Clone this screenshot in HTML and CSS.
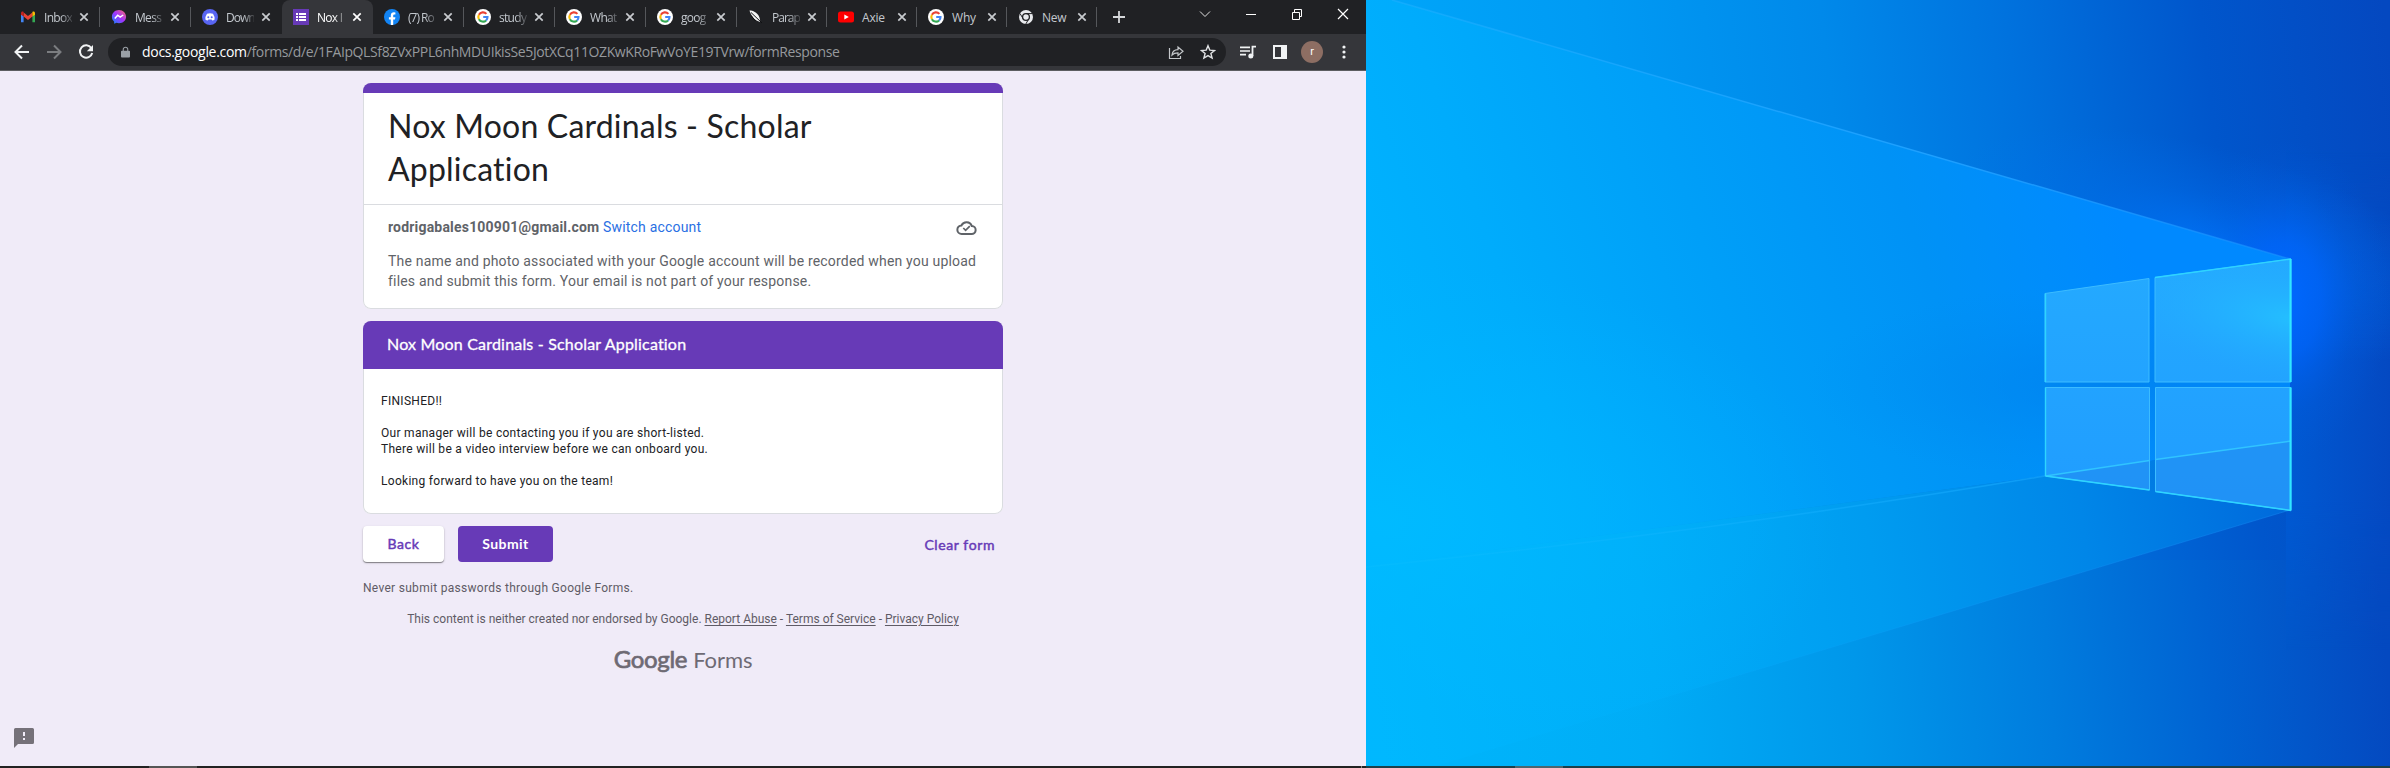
FILE: index.html
```html
<!DOCTYPE html>
<html lang="en">
<head>
<meta charset="utf-8">
<title>Nox Moon Cardinals - Scholar Application</title>
<link rel="stylesheet" href="styles.css">
</head>
<body>
<svg class="defs" width="0" height="0">
  <symbol id="close" viewBox="0 0 10 10"><path d="M1.3 1.3 8.7 8.7M8.7 1.3 1.3 8.7" stroke="currentColor" stroke-width="1.7" fill="none"/></symbol>
  <symbol id="google" viewBox="0 0 16 16"><circle cx="8" cy="8" r="8" fill="#fff"/>
    <g fill="none" stroke-width="2.1"><path d="M11.4 4.9A4.6 4.6 0 0 0 3.9 5.8" stroke="#ea4335"/><path d="M3.9 5.8a4.6 4.6 0 0 0 0 4.4" stroke="#fbbc05"/><path d="M3.9 10.2a4.6 4.6 0 0 0 7.2 1.2" stroke="#34a853"/><path d="M11.1 11.4A4.6 4.6 0 0 0 12.5 8H8.2" stroke="#4285f4"/></g></symbol>
</svg>
<div class="screens">
<div class="screen-left">
  <div class="tabstrip">
    <div class="tab"><svg class="ico" viewBox="0 0 16 16"><path d="M1 4v9.2h2.600V7.500z" fill="#4285f4"/><path d="M15 4v9.200h-2.600V7.500z" fill="#34a853"/><path d="M3.600 3.600 8 7l4.400-3.400v4L8 11 3.600 7.600z" fill="#ea4335"/><path d="M1 4.200c0-1.500 1.500-2 2.600-1.200v4.600L1 5.700z" fill="#c5221f"/><path d="M15 4.200c0-1.500-1.500-2-2.600-1.200v4.600L15 5.700z" fill="#fbbc04"/></svg><span class="name">Inbox</span><svg class="x"><use href="#close"/></svg></div>
    <div class="tab"><svg class="ico" viewBox="0 0 16 16"><defs><linearGradient id="ms" x1="0" y1="1" x2="1" y2="0"><stop offset="0" stop-color="#0a8cff"/><stop offset=".5" stop-color="#a033ff"/><stop offset="1" stop-color="#ff6a6a"/></linearGradient></defs><path d="M8 1C4 1 .900 3.900.9 7.700c0 2 .8 3.600 2.200 4.800l.1 2.300 2.300-1c.8.200 1.600.400 2.500.4 4 0 7.100-2.900 7.100-6.500S12 1 8 1z" fill="url(#ms)"/><path d="m3.800 9.500 2.900-3.300 2.500 1.900 3-2.100" fill="none" stroke="#fff" stroke-width="1.500"/></svg><span class="name">Mess</span><svg class="x"><use href="#close"/></svg></div>
    <div class="tab"><svg class="ico" viewBox="0 0 16 16"><circle cx="8" cy="8" r="8" fill="#5865f2"/><path d="M5 4.800Q8 3.800 11 4.800q1.800 2.700 1.600 5.600-1 .9-2.300 1.100l-.7-1H6.400l-.7 1q-1.300-.2-2.300-1.100Q3.200 7.500 5 4.800z" fill="#fff"/><circle cx="6.300" cy="8.200" r="1" fill="#5865f2"/><circle cx="9.700" cy="8.200" r="1" fill="#5865f2"/></svg><span class="name tight">Down</span><svg class="x"><use href="#close"/></svg></div>
    <div class="tab active"><svg class="ico" viewBox="0 0 16 16"><path d="M0 0h16v16H0z" fill="#673ab7"/><path d="M3 4h2v2H3zM6 4h7v2H6zM3 7h2v2H3zM6 7h7v2H6zM3 10h2v2H3zM6 10h7v2H6z" fill="#fff"/></svg><span class="name">Nox I</span><svg class="x"><use href="#close"/></svg></div>
    <div class="tab"><svg class="ico" viewBox="0 0 16 16"><circle cx="8" cy="8" r="8" fill="#1284f4"/><path d="M6.800 16v-5.500H4.900V8.200h1.900V6.600c0-2.200 1.300-3.300 3.100-3.300l1.500.1v2h-1c-1 0-1.200.6-1.200 1.300v1.500h2.200l-.4 2.300H9.200V16z" fill="#fff"/></svg><span class="name tight">(7) Ro</span><svg class="x"><use href="#close"/></svg></div>
    <div class="tab"><svg class="ico"><use href="#google"/></svg><span class="name">study</span><svg class="x"><use href="#close"/></svg></div>
    <div class="tab"><svg class="ico"><use href="#google"/></svg><span class="name">What</span><svg class="x"><use href="#close"/></svg></div>
    <div class="tab"><svg class="ico"><use href="#google"/></svg><span class="name">goog</span><svg class="x"><use href="#close"/></svg></div>
    <div class="tab narrow"><svg class="ico" viewBox="0 0 16 16"><path d="M1.500 1.500C5 1.500 9 3.500 10.800 7c1 2 1.400 3.800 1.300 6C7 11.500 3.500 8 1.500 1.500z" fill="#f4f4f4"/><path d="M3 3.500 14 14" stroke="#101113" stroke-width="1"/><path d="M3 6.500 7.500 12" stroke="#0c0c0d"/></svg><span class="name tight">Parap</span><svg class="x"><use href="#close"/></svg></div>
    <div class="tab narrow"><svg class="ico" viewBox="0 0 16 16"><rect y="2.500" width="16" height="11" rx="2.500" fill="#f00"/><path d="m6.300 5.500 4.500 2.500-4.500 2.500z" fill="#fff"/></svg><span class="name plain">Axie</span><svg class="x"><use href="#close"/></svg></div>
    <div class="tab narrow"><svg class="ico"><use href="#google"/></svg><span class="name plain">Why</span><svg class="x"><use href="#close"/></svg></div>
    <div class="tab narrow"><svg class="ico" viewBox="0 0 16 16"><circle cx="8" cy="8" r="7" fill="#e8eaed"/><circle cx="8" cy="8" r="3.400" fill="none" stroke="#202124" stroke-width="1.300"/><path d="M8 4.600h6.300M5.100 9.700 2 4.500M10.900 9.700 7.800 15" stroke="#202124" stroke-width="1"/></svg><span class="name plain">New</span><svg class="x"><use href="#close"/></svg></div>
    <svg class="plus" viewBox="0 0 12 12"><path d="M6 0v12M0 6h12" stroke="#d5d7da" stroke-width="1.800"/></svg>
    <div class="winbtns">
      <svg viewBox="0 0 12 12"><path d="m1 3.500 5 5 5-5" fill="none" stroke="#e0e0e0"/></svg>
      <svg viewBox="0 0 12 12"><path d="M1 6.500h10" stroke="#fff"/></svg>
      <svg viewBox="0 0 12 12"><path d="M1.500 4.500h7v7h-7zM3.500 4.500v-3h7v7h-2" fill="none" stroke="#fff"/></svg>
      <svg viewBox="0 0 12 12"><path d="m1 1 10 10M11 1 1 11" stroke="#fff" stroke-width="1.200"/></svg>
    </div>
  </div>
  <div class="toolbar">
    <div class="nav">
      <svg viewBox="0 0 16 16"><path d="M15 8H2M8 1.500 1.500 8 8 14.500" fill="none" stroke="#f1f3f4" stroke-width="2"/></svg>
      <svg viewBox="0 0 16 16"><path d="M1 8h13M8 1.500 14.500 8 8 14.500" fill="none" stroke="#7b7d80" stroke-width="2"/></svg>
      <svg viewBox="0 0 16 16"><path d="M13.300 4A6.200 6.200 0 1 0 14.200 9" fill="none" stroke="#f1f3f4" stroke-width="2"/><path d="M15 1v6.200H8.800z" fill="#f1f3f4"/></svg>
    </div>
    <div class="omnibox">
      <svg class="lock" viewBox="0 0 10 12"><path d="M1 4.500h8a1 1 0 0 1 1 1V11a1 1 0 0 1-1 1H1a1 1 0 0 1-1-1V5.500a1 1 0 0 1 1-1z" fill="#9aa0a6"/><path d="M2.500 5V3a2.500 2.300 0 0 1 5 0v2" fill="none" stroke="#9aa0a6" stroke-width="1.200"/></svg>
      <div class="url"><span class="host">docs.google.com</span><span class="path">/forms/d/e/1FAIpQLSf8ZVxPPL6nhMDUIkisSe5JotXCq11OZKwKRoFwVoYE19TVrw/formResponse</span></div>
      <svg class="share" viewBox="0 0 16 16"><path d="M1.500 4v10.500h11V12" fill="none" stroke="#c4c7ca" stroke-width="1.200"/><path d="M4 11c.4-3.500 2.500-5.200 6-5.300V3l5 4.300-5 4.200V8.900C7.500 8.900 5.500 9.400 4 11z" fill="none" stroke="#c4c7ca" stroke-width="1.200"/></svg>
      <svg class="star" viewBox="0 0 16 16"><path d="m8 1.700 1.800 4.400 4.700.4-3.600 3 1.200 4.600L8 11.600l-4.100 2.500 1.200-4.600-3.600-3 4.700-.4z" fill="none" stroke="#e0e2e4" stroke-width="1.400"/></svg>
    </div>
    <div class="actions">
      <svg viewBox="0 0 16 16"><path d="M0 3.300h10M0 7h10M0 10.700h6" stroke="#f1f3f4" stroke-width="1.700"/><path d="M12.500 12V2.700H16" fill="none" stroke="#f1f3f4" stroke-width="1.800"/><circle cx="10.800" cy="12" r="2.500" fill="#f1f3f4"/></svg>
      <svg viewBox="0 0 16 16"><path d="M1 1h14v14H1zM3 3v10h6V3z" fill="#f1f3f4" fill-rule="evenodd"/></svg>
      <span class="avatar">r</span>
      <svg viewBox="0 0 16 16" fill="#f1f3f4"><circle cx="8" cy="3" r="1.600"/><circle cx="8" cy="8" r="1.600"/><circle cx="8" cy="13" r="1.600"/></svg>
    </div>
  </div>
  <main class="page">
    <div class="column">
      <section class="card intro">
        <h1>Nox Moon Cardinals - Scholar Application</h1>
        <div class="account">
          <div class="row"><span><b>rodrigabales100901@gmail.com</b> <a>Switch account</a></span>
            <svg class="cloud" viewBox="0 0 20 18"><path d="M5.300 16A4.300 4.300 0 0 1 5 7.400 5.600 5.600 0 0 1 15.300 8a4 4 0 0 1-.3 8z" fill="none" stroke="#5f6368" stroke-width="2"/><path d="m6.800 10 2.300 2.300 4.200-4.200" fill="none" stroke="#5f6368" stroke-width="1.700"/></svg></div>
          <p>The name and photo associated with your Google account will be recorded when you upload<br>files and submit this form. Your email is not part of your response.</p>
        </div>
      </section>
      <section class="card section">
        <h2>Nox Moon Cardinals - Scholar Application</h2>
        <div class="body">FINISHED!!<br><br>Our manager will be contacting you if you are short-listed.<br>There will be a video interview before we can onboard you.<br><br>Looking forward to have you on the team!</div>
      </section>
      <div class="buttons"><span class="btn back">Back</span><span class="btn submit">Submit</span><span class="clear">Clear form</span></div>
      <p class="never">Never submit passwords through Google Forms.</p>
      <p class="legal">This content is neither created nor endorsed by Google. <u>Report Abuse</u> - <u>Terms of Service</u> - <u>Privacy Policy</u></p>
      <div class="logo"><span class="g">Google</span><span>Forms</span></div>
    </div>
    <svg class="feedback" viewBox="0 0 20 20"><path d="M1.500 0h17A1.500 1.500 0 0 1 20 1.500v13a1.500 1.500 0 0 1-1.500 1.500H4l-4 4V1.500A1.500 1.500 0 0 1 1.500 0zM9 4v4h2V4zM9 10v2h2v-2z" fill="#757179" fill-rule="evenodd"/></svg>
  </main>
  <div class="taskbar"><i class="running"></i><i class="peek"></i></div>
</div>
<div class="screen-right">
  <svg class="wall" viewBox="0 0 1024 766" preserveAspectRatio="none">
    <defs>
      <linearGradient id="sky" gradientUnits="userSpaceOnUse" x1="0" y1="60" x2="1010" y2="-60"><stop offset="0" stop-color="#00a6fa"/><stop offset=".22" stop-color="#009bf4"/><stop offset=".45" stop-color="#0089ea"/><stop offset=".63" stop-color="#0072de"/><stop offset=".82" stop-color="#0056cc"/><stop offset="1" stop-color="#0448c0"/></linearGradient>
      <linearGradient id="beam" gradientUnits="userSpaceOnUse" x1="0" y1="500" x2="760" y2="230"><stop offset="0" stop-color="#00b6ff"/><stop offset=".25" stop-color="#00acfc"/><stop offset=".5" stop-color="#009ff8"/><stop offset=".75" stop-color="#0092f6"/><stop offset="1" stop-color="#0089ff"/></linearGradient>
      <linearGradient id="floor" gradientUnits="userSpaceOnUse" x1="0" y1="640" x2="920" y2="500"><stop offset="0" stop-color="#00b8fe"/><stop offset=".3" stop-color="#00adf8"/><stop offset=".55" stop-color="#009cf0"/><stop offset=".78" stop-color="#0086e8"/><stop offset="1" stop-color="#006adc"/></linearGradient>
      <linearGradient id="ground" gradientUnits="userSpaceOnUse" x1="60" y1="740" x2="1020" y2="660"><stop offset="0" stop-color="#00b5fb"/><stop offset=".23" stop-color="#00acf6"/><stop offset=".45" stop-color="#0097ea"/><stop offset=".65" stop-color="#007cde"/><stop offset=".82" stop-color="#0062d2"/><stop offset="1" stop-color="#0449c0"/></linearGradient>
      <linearGradient id="side" gradientUnits="userSpaceOnUse" x1="923" x2="1024" y1="0" y2="0"><stop offset="0" stop-color="#0059d2"/><stop offset="1" stop-color="#0449c2"/></linearGradient>
      <linearGradient id="fade" x1="0" x2="0" y1="0" y2="1"><stop offset="0" stop-color="#fff" stop-opacity="0"/><stop offset=".4" stop-color="#fff"/><stop offset=".7" stop-color="#fff"/><stop offset="1" stop-color="#fff" stop-opacity="0"/></linearGradient>
      <mask id="sidemask"><rect x="920" y="150" width="104" height="500" fill="url(#fade)"/></mask>
      <radialGradient id="glow" gradientUnits="userSpaceOnUse" cx="0" cy="0" r="1" gradientTransform="translate(918 300) scale(106 160)"><stop offset="0" stop-color="#0068ff"/><stop offset=".35" stop-color="#0064fa" stop-opacity=".75"/><stop offset=".7" stop-color="#005ee8" stop-opacity=".22"/><stop offset="1" stop-color="#005ce0" stop-opacity="0"/></radialGradient>
      <radialGradient id="ridge" gradientUnits="userSpaceOnUse" cx="0" cy="0" r="1" gradientTransform="translate(850 244) rotate(16) scale(270 95)"><stop offset="0" stop-color="#0078ff" stop-opacity=".75"/><stop offset=".5" stop-color="#0072f4" stop-opacity=".3"/><stop offset="1" stop-color="#0070f0" stop-opacity="0"/></radialGradient>
      <radialGradient id="left" gradientUnits="userSpaceOnUse" cx="0" cy="0" r="1" gradientTransform="translate(20 520) scale(460 260)"><stop offset="0" stop-color="#00bcff" stop-opacity=".8"/><stop offset="1" stop-color="#00b4ff" stop-opacity="0"/></radialGradient>
      <radialGradient id="shade" gradientUnits="userSpaceOnUse" cx="0" cy="0" r="1" gradientTransform="translate(740 384) scale(300 100)"><stop offset="0" stop-color="#0080ec" stop-opacity=".7"/><stop offset="1" stop-color="#008cf0" stop-opacity="0"/></radialGradient>
      <linearGradient id="l1" x1="0" x2="1" y1="0" y2="0"><stop offset="0" stop-color="#22b0ff" stop-opacity=".5"/><stop offset=".6" stop-color="#1ea0ff"/><stop offset="1" stop-color="#1a90ff" stop-opacity=".6"/></linearGradient>
      <linearGradient id="l2" x1="0" x2="1" y1="0" y2="0"><stop offset="0" stop-color="#10c0ff" stop-opacity=".4"/><stop offset="1" stop-color="#18a8ff"/></linearGradient>
      <linearGradient id="l3" x1="0" x2="1" y1="0" y2="0"><stop offset="0" stop-color="#08b8ff" stop-opacity="0"/><stop offset="1" stop-color="#1488f4" stop-opacity=".5"/></linearGradient>
      <linearGradient id="pane" x1="0" y1="0" x2="0" y2="1"><stop offset="0" stop-color="#24aaff"/><stop offset="1" stop-color="#209cff"/></linearGradient>
      <radialGradient id="shine" gradientUnits="userSpaceOnUse" cx="0" cy="0" r="1" gradientTransform="translate(925 318) rotate(8) scale(170 64)"><stop offset="0" stop-color="#24beff"/><stop offset="1" stop-color="#22aaff" stop-opacity="0"/></radialGradient>
    </defs>
    <rect width="1024" height="766" fill="url(#sky)"/>
    <path d="M0 560H924V510H1024V766H0z" fill="url(#ground)"/>
    <rect x="920" y="150" width="104" height="500" fill="url(#side)" mask="url(#sidemask)"/>
    <rect x="500" y="60" width="524" height="440" fill="url(#ridge)"/>
    <rect x="780" y="110" width="244" height="400" fill="url(#glow)"/>
    <path d="M0 0H26L924 259V441L679 476 0 567z" fill="url(#beam)"/>
    <path d="M0 567 679 476 924 441V510L70 766H0z" fill="url(#floor)"/>
    <path d="M0 240H490V766H0z" fill="url(#left)"/>
    <rect x="430" y="280" width="494" height="190" fill="url(#shade)"/>
    <path d="M26 0 924 259" stroke="url(#l1)" stroke-width="1.500"/>
    <path d="M0 567Q360 530 679 476" stroke="url(#l2)" stroke-width="1.500" fill="none" opacity=".6"/>
    <path d="M70 766 924 510" stroke="url(#l3)"/>
    <path d="M679 293.500 783 278.500V382H679zM789 277.500 925 259V382H789zM679.500 387.500H783.500V490L679.500 476zM789.500 387.500H925V510.500L789.500 491.500z" fill="url(#pane)"/>
    <path d="M789 277.500 925 259V382H789z" fill="url(#shine)"/>
    <path d="M679.500 476 783.500 460.500V490zM789.500 459.500 925 441V510.500L789.500 491.500z" fill="#2090f4" fill-opacity=".8"/>
    <path d="M679.500 476 783.500 460.500M789.500 459.500 925 441" stroke="#30c4ff" stroke-width="1.500"/>
    <path d="M679 293.500 783 278.500V382H679zM789 277.500 925 259V382H789zM679.500 387.500H783.500V490L679.500 476zM789.500 387.500H925V510.500L789.500 491.500z" fill="none" stroke="#3cbcff"/>
    <path d="M679.500 382V293.500M679.500 387.500V476M789 277.500 925 259M789.500 491.500 925 510.500M679.500 476 783.500 490" fill="none" stroke="#2ed4ff" stroke-width="1.400"/>
    <path d="M924.500 259V382M924.500 387.500V510.500" stroke="#2ee8ff" stroke-width="2"/>
  </svg>
  <div class="taskbar second"><i class="running"></i></div>
</div>
</div>
</body>
</html>
```
FILE: styles.css
```css
*{box-sizing:border-box}
body{margin:0;width:2390px;height:768px;overflow:hidden;font-family:Roboto,sans-serif}
h1,h2,p{margin:0;font-weight:400}
svg{display:block;flex:none}
.defs{position:absolute}
.screens{display:flex;height:768px}
.screen-left{width:1366px;display:flex;flex-direction:column;background:#f0ebf8}
.screen-right{width:1024px;display:flex;flex-direction:column}

/* tab strip */
.tabstrip{height:34px;background:#202124;display:flex;align-items:center;padding-left:9px;color:#c3c8ce;font:12px "Open Sans",sans-serif}
.tab{width:91px;height:34px;display:flex;align-items:center;padding-left:11px;position:relative}
.tab.narrow{width:90px}
.tab::after{content:"";position:absolute;right:0;top:7px;height:20px;width:1px;background:#55575b}
.tab.active::after,.tab:has(+ .active)::after{display:none}
.tab.active{background:#35363a;border-radius:8px 8px 0 0;color:#fff}
.ico{width:16px;height:16px}
.name{width:28px;margin-left:8px;white-space:nowrap;letter-spacing:-.7px;-webkit-mask-image:linear-gradient(90deg,#000 60%,#0003);mask-image:linear-gradient(90deg,#000 60%,#0003)}
.name.tight{letter-spacing:-1px}
.name.plain{letter-spacing:-.2px;-webkit-mask-image:none;mask-image:none}
.x{width:10px;height:10px;margin-left:7px;color:#c8cbcf}
.active .x{color:#fff}
.plus{width:12px;height:12px;margin-left:16px}
.winbtns{margin-left:auto;margin-right:17px;display:flex;gap:34px;margin-bottom:6px}
.winbtns svg{width:12px;height:12px}

/* toolbar */
.toolbar{height:37px;background:#35363a;border-bottom:1px solid #5c5d61;display:flex;align-items:center}
.nav{display:flex;gap:16px;padding-left:14px;width:108px}
.nav svg,.actions svg{width:16px;height:16px}
.omnibox{width:1118px;height:28px;border-radius:14px;background:#202124;display:flex;align-items:center;padding:0 10px 0 13px}
.lock{width:9px;height:12px}
.url{margin-left:12px;flex:1;font:14px/20px "Open Sans",sans-serif;white-space:nowrap}
.host{color:#fff;letter-spacing:-.3px}
.path{color:#96999d;letter-spacing:-.385px}
.share,.star{width:16px;height:16px}
.star{margin-left:16px}
.actions{display:flex;align-items:center;padding-left:14px;gap:16px}
.avatar{width:22px;height:22px;border-radius:50%;background:#8d6e63;color:#fff;font-size:11px;line-height:21px;text-align:center;margin:0 -3px}

/* form page */
.page{flex:1;background:#f0ebf8;display:flex;justify-content:center;position:relative;padding-top:12px}
.column{width:640px;display:flex;flex-direction:column}
.card{background:#fff;box-shadow:inset 0 0 0 1px #dadce0;border-radius:8px;overflow:hidden}
.intro{height:226px;padding-top:11px}
.intro::before{content:"";display:block;height:10px;margin-top:-11px;margin-bottom:11px;background:#673ab7}
.intro h1{font:32px/43.2px Lato,sans-serif;letter-spacing:.2px;color:#202124;padding:0 25px 14px;width:501px}
.account{margin:0 1px;border-top:1px solid #dadce0;padding:12px 24px;color:#5f6368;font-size:14px;line-height:20px;letter-spacing:.19px}
.account b{font-weight:700}
.account a{color:#2a6fe3}
.row{display:flex;justify-content:space-between;align-items:center}
.cloud{width:21px;height:18px;margin-right:1px}
.account p{margin-top:14px;white-space:nowrap}
.section{margin-top:12px;height:193px}
.section h2{height:48px;padding-left:24px;background:#673ab7;color:#fff;font:400 16px/46px Lato,sans-serif;letter-spacing:.19px;-webkit-text-stroke:.3px #fff}
.body{padding:24px 18px;font-size:12px;line-height:16px;letter-spacing:.29px;color:#202124}
.buttons{display:flex;align-items:center;margin-top:12px;height:36px;font:400 14px/35px Lato,sans-serif;letter-spacing:.6px;-webkit-text-stroke:.45px currentColor}
.btn{height:36px;border-radius:4px;text-align:center}
.back{width:81px;background:#fff;color:#673ab7;box-shadow:0 1px 1px #0006,0 1px 3px #0002}
.submit{width:95px;margin-left:14px;background:#673ab7;color:#fff;font-weight:700;letter-spacing:.4px;-webkit-text-stroke:0}
.clear{margin-left:auto;margin-right:8px;color:#673ab7}
.never{margin-top:18px;font-size:12px;line-height:16px;letter-spacing:.29px;color:#5f5b66}
.legal{margin-top:15px;font-size:12px;line-height:16px;color:#5f5b66;text-align:center}
.legal u{text-underline-offset:2px}
.logo{margin-top:17px;display:flex;justify-content:center;align-items:baseline;gap:6px;font:22px/30px Lato,sans-serif;color:#6e6a74;letter-spacing:-.1px}
.logo .g{font-size:24px;font-weight:400;letter-spacing:-.3px;-webkit-text-stroke:.7px #6e6a74}
.feedback{position:absolute;left:14px;top:657px;width:20px;height:20px}

/* taskbars */
.taskbar{height:2px;background:#222;display:flex}
.running{width:48px;margin-left:149px;background:#555}
.peek{width:1px;margin-left:auto;margin-right:4px;background:#888}
.second{background:#1d4049}
.second .running{background:#4d666e}
.wall{width:1024px;height:766px}
```
